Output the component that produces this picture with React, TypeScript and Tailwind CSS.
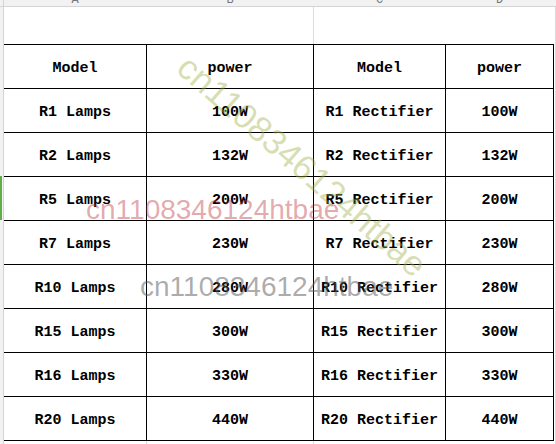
const rows = [
  ["R1 Lamps", "100W", "R1 Rectifier", "100W"],
  ["R2 Lamps", "132W", "R2 Rectifier", "132W"],
  ["R5 Lamps", "200W", "R5 Rectifier", "200W"],
  ["R7 Lamps", "230W", "R7 Rectifier", "230W"],
  ["R10 Lamps", "280W", "R10 Rectifier", "280W"],
  ["R15 Lamps", "300W", "R15 Rectifier", "300W"],
  ["R16 Lamps", "330W", "R16 Rectifier", "330W"],
  ["R20 Lamps", "440W", "R20 Rectifier", "440W"],
]

const cols = ["w-[143px]", "w-[167px]", "w-[132px]", "w-[108px]"]

function Row({ cells }: { cells: string[] }) {
  return (
    <div className="flex h-[44px] border-b border-black">
      {cells.map((c, i) => (
        <div
          key={i}
          className={`${cols[i]} flex items-center justify-center border-r border-black pt-[5px] text-[15px] font-bold text-black`}
        >
          {c}
        </div>
      ))}
    </div>
  )
}

export default function App() {
  return (
    <div
      className="relative w-[556px] h-[444px] overflow-hidden bg-white"
      style={{ fontFamily: '"Liberation Mono", "DejaVu Sans Mono", monospace' }}
    >
      {/* column letters strip */}
      <div className="flex h-[7px] overflow-hidden border-b border-[#d4d4d4] bg-[#f2f2f2] text-[12px] leading-none text-[#777]">
        <div className="w-[4px] border-r border-[#d4d4d4]" />
        <div className="w-[143px] border-r border-[#d4d4d4] text-center -translate-y-[6px]">A</div>
        <div className="w-[167px] border-r border-[#d4d4d4] text-center -translate-y-[6px]">B</div>
        <div className="w-[132px] border-r border-[#d4d4d4] text-center -translate-y-[6px]">C</div>
        <div className="w-[108px] border-r border-[#d4d4d4] text-center -translate-y-[6px]">D</div>
      </div>

      <div className="flex">
        {/* row header gutter */}
        <div className="relative w-[4px] h-[437px] border-r border-[#d4d4d4] bg-[#f2f2f2]">
          <div className="absolute left-0 top-[169px] w-[2px] h-[44px] bg-[#5fae4a]" />
        </div>

        <div className="flex flex-col">
          {/* blank row */}
          <div className="flex h-[37px]">
            <div className="w-[143px]" />
            <div className="w-[167px] border-r border-[#dcdcdc]" />
            <div className="w-[132px]" />
            <div className="w-[108px]" />
          </div>

          <div className="border-t border-black">
            <Row cells={["Model", "power", "Model", "power"]} />
            {rows.map((r) => (
              <Row key={r[0]} cells={r} />
            ))}
          </div>

          <div className="flex h-[4px]">
            <div className="w-[143px] border-r border-[#dcdcdc]" />
            <div className="w-[167px] border-r border-[#dcdcdc]" />
          </div>
        </div>

        <div className="w-[1px] ml-[1px] h-[437px] bg-[#dcdcdc]" />
      </div>

      {/* watermarks */}
      <div
        className="pointer-events-none absolute left-[86px] top-[196px] text-[28px] leading-none text-[rgba(190,50,60,0.42)]"
        style={{ fontFamily: '"Liberation Sans", Arial, sans-serif' }}
      >
        cn1108346124htbae
      </div>
      <div
        className="pointer-events-none absolute left-[140px] top-[273px] text-[28px] leading-none text-[rgba(90,90,90,0.5)]"
        style={{ fontFamily: '"Liberation Sans", Arial, sans-serif' }}
      >
        cn1108346124htbae
      </div>
      <div
        className="pointer-events-none absolute left-[183px] top-[44px] origin-left rotate-[41deg] text-[35px] leading-none text-[rgba(160,175,70,0.42)]"
        style={{ fontFamily: '"Liberation Sans", Arial, sans-serif' }}
      >
        cn1108346124htbae
      </div>
    </div>
  )
}
